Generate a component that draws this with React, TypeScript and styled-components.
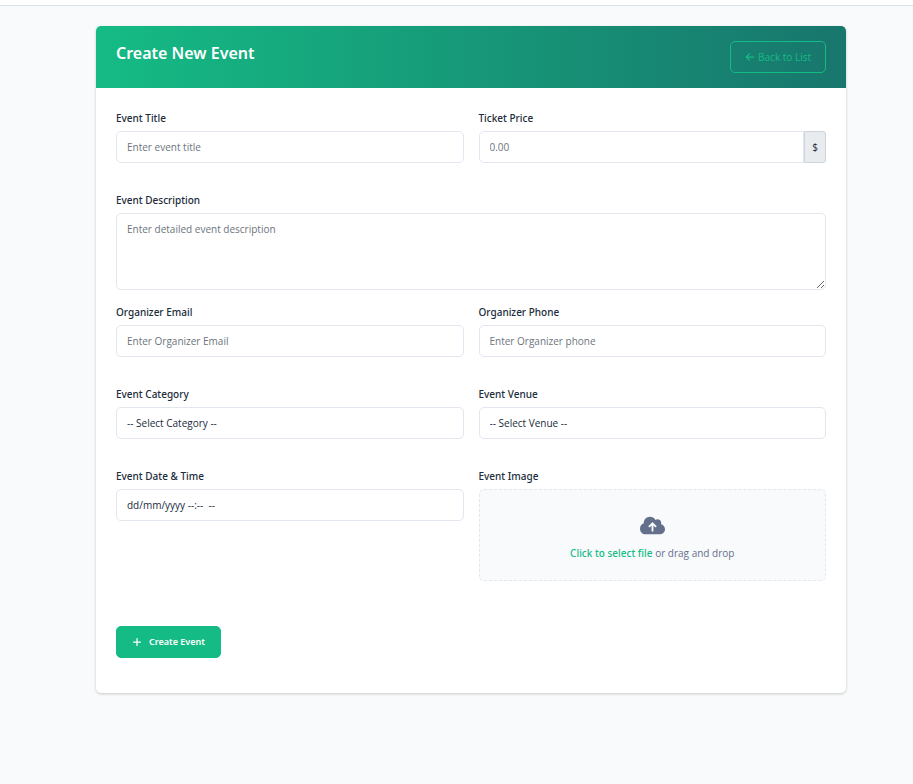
import React from "react";
import styled, { createGlobalStyle, css } from "styled-components";
import { FaArrowLeft, FaCloudArrowUp, FaPlus } from "react-icons/fa6";

const mediumFont = `"Segoe UI", "Noto Sans", "Open Sans", sans-serif`;

const GlobalStyle = createGlobalStyle`
  *, *::before, *::after { box-sizing: border-box; }
  body {
    margin: 0;
    background: #f9fafc;
    color: #212b3b;
    font-family: "Segoe UI", "Open Sans", "Noto Sans", sans-serif;
    font-size: 10px;
    line-height: 20px;
  }
  button, input, select, textarea { font: inherit; color: inherit; }
`;

const TopBar = styled.header`
  height: 6px;
  background: #fff;
  border-bottom: 1px solid #dee2e6;
`;

const Page = styled.main`
  padding: 20px 67px 20px 96px;
`;

const Card = styled.section`
  background: #fff;
  border-radius: 5px;
  box-shadow: 0 1px 3px rgba(0, 0, 0, 0.2);
  overflow: hidden;
`;

const CardHeader = styled.div`
  display: flex;
  justify-content: space-between;
  align-items: flex-start;
  padding: 15px 20px;
  background: linear-gradient(to right, #15bb84, #18766d);
`;

const Title = styled.h1`
  margin: 0;
  color: #fff;
  font-family: ${mediumFont};
  font-size: 16px;
  font-weight: 600;
  line-height: 24px;
`;

const buttonBase = css`
  display: inline-flex;
  align-items: center;
  height: 32px;
  border: 1px solid #15bb84;
  border-radius: 5px;
  cursor: pointer;
  white-space: nowrap;
`;

const BackLink = styled.a`
  ${buttonBase}
  gap: 3px;
  padding: 0 14px;
  color: #15bb84;
  text-decoration: none;
`;

const SubmitButton = styled.button`
  ${buttonBase}
  gap: 7px;
  padding: 0 15px;
  background: #15bb84;
  color: #fff;
  font-family: ${mediumFont};
  font-size: 9px;
  font-weight: 600;
`;

const Form = styled.form`
  padding: 20px 20px 35px;
`;

const Row = styled.div<{ $space: number }>`
  display: grid;
  grid-template-columns: repeat(auto-fit, minmax(260px, 1fr));
  gap: 27px 15px;
  align-items: start;
  margin-bottom: ${(p) => p.$space}px;
`;

const Field = styled.div`
  display: flex;
  flex-direction: column;
  gap: 3px;
  min-width: 0;
`;

const Label = styled.label`
  font-family: ${mediumFont};
  font-weight: 500;
`;

const controlBase = css`
  width: 100%;
  min-width: 0;
  padding: 0 10px;
  background: #fff;
  border: 1px solid #e2e6ef;
  border-radius: 5px;
  outline: none;

  &::placeholder { color: #6c757d; opacity: 1; }
  &:focus { border-color: #15bb84; }
`;

const Input = styled.input`
  ${controlBase}
  height: 32px;
`;

const DateInput = styled(Input)`
  &::placeholder { color: #212b3b; }
`;

const Select = styled.select`
  ${controlBase}
  height: 32px;
  appearance: none;
`;

const TextArea = styled.textarea`
  ${controlBase}
  display: block;
  height: 77px;
  padding: 5px 10px;
  resize: vertical;
`;

const InputGroup = styled.div`
  display: flex;

  ${Input} {
    flex: 1;
    border-radius: 5px 0 0 5px;
  }
`;

const Addon = styled.span`
  display: flex;
  align-items: center;
  justify-content: center;
  width: 22px;
  background: #e9ecef;
  border: 1px solid #ced4da;
  border-radius: 0 3px 3px 0;
`;

const DropZone = styled.label`
  display: flex;
  flex-direction: column;
  align-items: center;
  gap: 5px;
  height: 92px;
  padding-top: 23px;
  background: #f9fafc;
  border: 1px dashed #e2e6ef;
  border-radius: 5px;
  color: #64708b;
  cursor: pointer;
`;

const Accent = styled.span`
  color: #15bb84;
  font-family: ${mediumFont};
  font-weight: 500;
`;

const FileInput = styled.input`
  display: none;
`;

export default function App() {
  return (
    <>
      <GlobalStyle />
      <TopBar />
      <Page>
        <Card>
          <CardHeader>
            <Title>Create New Event</Title>
            <BackLink href="#events">
              <FaArrowLeft size={10} />
              Back to List
            </BackLink>
          </CardHeader>
          <Form onSubmit={(e) => e.preventDefault()}>
            <Row $space={27}>
              <Field>
                <Label htmlFor="title">Event Title</Label>
                <Input id="title" placeholder="Enter event title" />
              </Field>
              <Field>
                <Label htmlFor="price">Ticket Price</Label>
                <InputGroup>
                  <Input id="price" inputMode="decimal" placeholder="0.00" />
                  <Addon>$</Addon>
                </InputGroup>
              </Field>
            </Row>
            <Row $space={12}>
              <Field>
                <Label htmlFor="description">Event Description</Label>
                <TextArea id="description" placeholder="Enter detailed event description" />
              </Field>
            </Row>
            <Row $space={27}>
              <Field>
                <Label htmlFor="email">Organizer Email</Label>
                <Input id="email" type="email" placeholder="Enter Organizer Email" />
              </Field>
              <Field>
                <Label htmlFor="phone">Organizer Phone</Label>
                <Input id="phone" type="tel" placeholder="Enter Organizer phone" />
              </Field>
            </Row>
            <Row $space={27}>
              <Field>
                <Label htmlFor="category">Event Category</Label>
                <Select id="category">
                  <option>-- Select Category --</option>
                </Select>
              </Field>
              <Field>
                <Label htmlFor="venue">Event Venue</Label>
                <Select id="venue">
                  <option>-- Select Venue --</option>
                </Select>
              </Field>
            </Row>
            <Row $space={45}>
              <Field>
                <Label htmlFor="date">Event Date &amp; Time</Label>
                <DateInput id="date" placeholder="dd/mm/yyyy --:--  --" />
              </Field>
              <Field>
                <Label htmlFor="image">Event Image</Label>
                <DropZone htmlFor="image">
                  <FaCloudArrowUp size={25} />
                  <span>
                    <Accent>Click to select file</Accent> or drag and drop
                  </span>
                </DropZone>
                <FileInput id="image" type="file" accept="image/*" />
              </Field>
            </Row>
            <SubmitButton type="submit">
              <FaPlus size={10} />
              Create Event
            </SubmitButton>
          </Form>
        </Card>
      </Page>
    </>
  );
}
